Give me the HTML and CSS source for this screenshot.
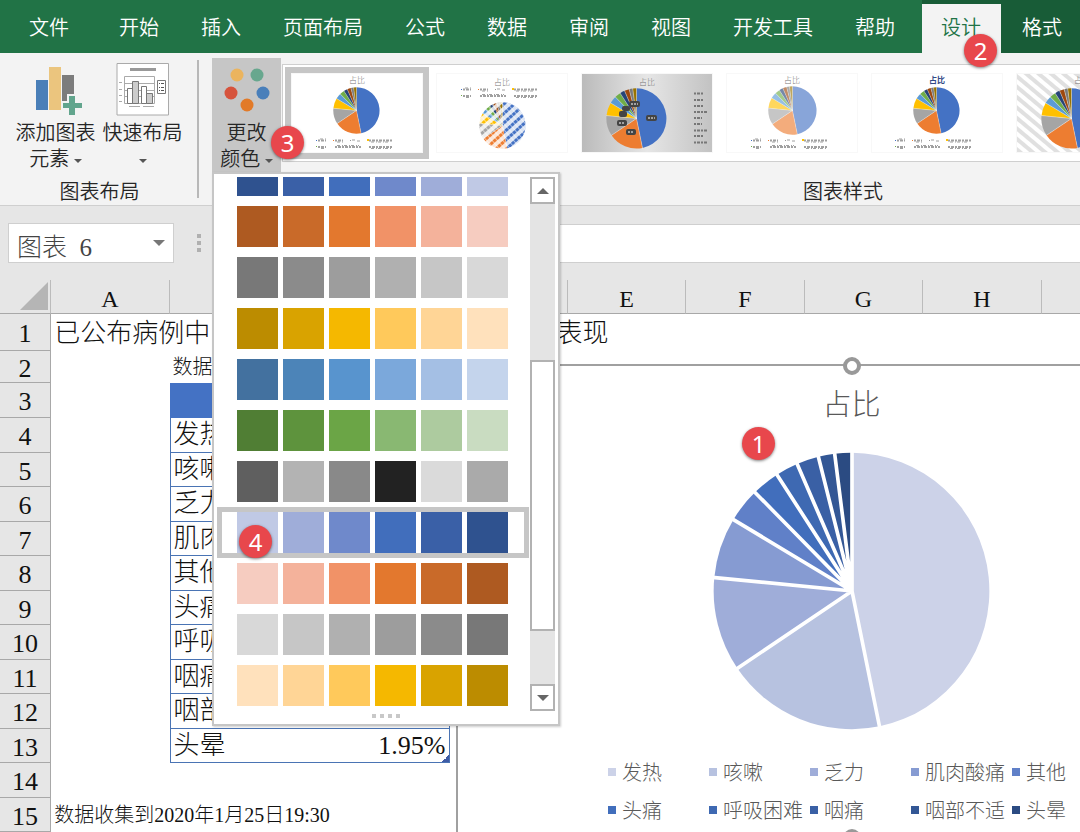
FILE: index.html
```html
<!DOCTYPE html>
<html lang="zh-CN">
<head>
<meta charset="utf-8">
<meta name="viewport" content="width=device-width, initial-scale=1">
<title>图表设计</title>
<link rel="stylesheet" href="styles.css">
</head>
<body>
<svg class="defs" aria-hidden="true">
  <symbol id="pie" viewBox="-420 -420 840 840">
    <path class="s1" d="M0 0L0 -415A415 415 0 0 1 83 406Z"/>
    <path class="s2" d="M0 0L83 406A415 415 0 0 1 -344 232Z"/>
    <path class="s3" d="M0 0L-344 232A415 415 0 0 1 -413 -41Z"/>
    <path class="s4" d="M0 0L-413 -41A415 415 0 0 1 -356 -214Z"/>
    <path class="s5" d="M0 0L-356 -214A415 415 0 0 1 -291 -296Z"/>
    <path class="s6" d="M0 0L-291 -296A415 415 0 0 1 -225 -349Z"/>
    <path class="s7" d="M0 0L-225 -349A415 415 0 0 1 -165 -381Z"/>
    <path class="s8" d="M0 0L-165 -381A415 415 0 0 1 -101 -403Z"/>
    <path class="s9" d="M0 0L-101 -403A415 415 0 0 1 -52 -412Z"/>
    <path class="s10" d="M0 0L-52 -412A415 415 0 0 1 0 -415Z"/>
    <path class="rays" d="M0 0V-420M0 0L84 414M0 0L-350 236M0 0L-419 -41M0 0L-362 -218M0 0L-296 -301M0 0L-229 -355M0 0L-168 -389M0 0L-103 -411M0 0L-53 -420"/>
  </symbol>
  <symbol id="mini-legend" viewBox="0 0 78 12">
    <g fill="none" stroke="#a0a0a0" stroke-width="2">
      <path stroke-dasharray="2 1 3 1" d="M2 2.500h8M19 2.500h8M53 2.500h24M2 9h8M19 9h26M53 9h24"/>
      <path stroke-width="1" d="M36 2l3 0M41 3h3"/>
      <path stroke-width="1" stroke-dasharray="3 2 1 1" d="M4 1h6M21 4h6M55 4h18M5 10.500h5M21 7.500h22M55 10.500h20"/>
    </g>
    <path fill="#4472c4" d="M0 2h1v1h-1z"/><path fill="#ed7d31" d="M17 2h1v1h-1z"/><path fill="#999" d="M34 2h1v1h-1z"/><path fill="#ffc000" d="M51 1h2v2h-2z"/><path fill="#70ad47" d="M0 8h1v1h-1z"/>
  </symbol>
  <pattern id="dots" width="4" height="7" patternUnits="userSpaceOnUse" patternTransform="rotate(-42)"><rect width="4" height="4" fill="#fff" opacity=".8"/><path d="M0 0V7" stroke="#fff" stroke-width="2" opacity=".5"/></pattern>
  <pattern id="stripes" width="8" height="8" patternUnits="userSpaceOnUse" patternTransform="rotate(40)"><rect width="8" height="4" fill="#e0e0e0"/></pattern>
  <linearGradient id="shade"><stop offset="0" stop-color="#bababa"/><stop offset=".5" stop-color="#e6e6e6"/><stop offset="1" stop-color="#c2c2c2"/></linearGradient>
  <symbol id="down" viewBox="0 0 12 6"><path d="M0 0h12l-6 6z"/></symbol>
</svg>

<nav class="tabs">
  <a class="tab file" href="#">文件</a>
  <a class="tab" href="#">开始</a>
  <a class="tab" href="#">插入</a>
  <a class="tab" href="#">页面布局</a>
  <a class="tab" href="#">公式</a>
  <a class="tab" href="#">数据</a>
  <a class="tab" href="#">审阅</a>
  <a class="tab" href="#">视图</a>
  <a class="tab" href="#">开发工具</a>
  <a class="tab" href="#">帮助</a>
  <div class="context">
    <a class="tab active" href="#" aria-current="page">设计<span class="badge b2">2</span></a>
    <a class="tab" href="#">格式</a>
  </div>
</nav>

<section class="ribbon">
  <div class="group layout">
    <div class="tools">
      <button class="tool" type="button">
        <svg class="icon" width="50" height="52" viewBox="0 0 50 52">
          <path fill="#4a7fb8" d="M5 17h12v30H5z"/><path fill="#ebc57e" d="M18 4h12v43H18z"/><path fill="#7c7c7c" d="M31 12h12v27H31z"/>
          <path fill="#f3f3f3" d="M36 31h10v7h7v8h-7v7H36v-7h-5v-8h5z"/><path fill="#62a58d" d="M38 33h6v7h7v5h-7v7h-6v-7h-6v-5h6z"/>
        </svg>
        <span>添加图表</span><span>元素 <svg class="caret" width="8" height="4"><use href="#down"/></svg></span>
      </button>
      <button class="tool" type="button">
        <svg class="icon" width="54" height="52" viewBox="0 0 54 52">
          <path fill="#fff" stroke="#aaa" d="M1 .5h51.500v51.500H1z"/><path fill="#999" d="M14 5h26v3H14z"/>
          <path fill="none" stroke="#aaa" d="M8.500 13.500h30v27h-30zM8 20.500h31M8 27.500h31M8 33.500h31M3 19.500h3M3 26.500h3M3 32.500h3M3 38.500h3M13 43.500h11M27 43.500h11"/>
          <g stroke="#777"><path fill="#fff" d="M11.500 25.500h5v15h-5zM25.500 23.500h5v17h-5z"/><path fill="#ccc" d="M16.500 18.500h6v22h-6zM30.500 30.500h6v10h-6z"/><path fill="#fff" d="M41.500 17.500h8v13h-8z"/></g>
          <path stroke="#555" stroke-dasharray="1 1 3 9" d="M43 20.500h6M43 24.500h6M43 27.500h6"/>
        </svg>
        <span>快速布局</span><span><svg class="caret" width="8" height="4"><use href="#down"/></svg></span>
      </button>
    </div>
    <div class="caption">图表布局</div>
  </div>

  <div class="group styles">
    <div class="tools">
      <div class="color-menu">
        <button class="tool pressed" type="button" aria-expanded="true">
          <svg class="icon" width="50" height="46" viewBox="0 0 50 46">
            <circle cx="15" cy="7" r="6.500" fill="#ebb45e"/><circle cx="35" cy="7" r="6.500" fill="#68a78e"/><circle cx="9" cy="25" r="6.500" fill="#d6533c"/><circle cx="41" cy="25" r="6.500" fill="#497fba"/><circle cx="25" cy="37" r="6.500" fill="#e27a28"/>
          </svg>
          <span>更改</span><span>颜色 <svg class="caret" width="8" height="4"><use href="#down"/></svg></span>
        </button>
        <span class="badge b3">3</span>

        <div class="popup">
          <div class="popup-body">
            <div class="palettes">
              <button type="button" class="palette blue" aria-label="蓝色 深到浅"><i></i><i></i><i></i><i></i><i></i><i></i></button>
              <button type="button" class="palette orange" aria-label="橙色 深到浅"><i></i><i></i><i></i><i></i><i></i><i></i></button>
              <button type="button" class="palette grey" aria-label="灰色 深到浅"><i></i><i></i><i></i><i></i><i></i><i></i></button>
              <button type="button" class="palette gold" aria-label="金色 深到浅"><i></i><i></i><i></i><i></i><i></i><i></i></button>
              <button type="button" class="palette sky" aria-label="浅蓝 深到浅"><i></i><i></i><i></i><i></i><i></i><i></i></button>
              <button type="button" class="palette green" aria-label="绿色 深到浅"><i></i><i></i><i></i><i></i><i></i><i></i></button>
              <button type="button" class="palette mixed" aria-label="灰黑"><i></i><i></i><i></i><i></i><i></i><i></i></button>
              <button type="button" class="palette blue reverse selected" aria-label="蓝色 浅到深"><i></i><i></i><i></i><i></i><i></i><i></i><span class="badge b4">4</span></button>
              <button type="button" class="palette orange reverse" aria-label="橙色 浅到深"><i></i><i></i><i></i><i></i><i></i><i></i></button>
              <button type="button" class="palette grey reverse" aria-label="灰色 浅到深"><i></i><i></i><i></i><i></i><i></i><i></i></button>
              <button type="button" class="palette gold reverse" aria-label="金色 浅到深"><i></i><i></i><i></i><i></i><i></i><i></i></button>
            </div>
            <div class="scroll">
              <button type="button" class="step" aria-label="向上"><svg class="up" width="12" height="6"><use href="#down"/></svg></button>
              <div class="track"><div class="thumb"></div></div>
              <button type="button" class="step" aria-label="向下"><svg width="12" height="6"><use href="#down"/></svg></button>
            </div>
          </div>
          <div class="grip"><i></i><i></i><i></i><i></i></div>
        </div>
      </div>

      <div class="gallery">
        <button type="button" class="style chosen" aria-label="样式 1"><svg viewBox="0 0 132 80" class="multi"><text x="66" y="10">占比</text><use href="#pie" x="42" y="14" width="47" height="47"/><use href="#mini-legend" x="25" y="65" width="78" height="12"/></svg></button>
        <button type="button" class="style" aria-label="样式 2"><svg viewBox="0 0 132 80" class="multi"><text x="66" y="12">占比</text><use href="#mini-legend" x="25" y="14" width="78" height="12"/><use href="#pie" x="43" y="29" width="47" height="47"/><circle cx="66" cy="53" r="24" fill="url(#dots)"/></svg></button>
        <button type="button" class="style" aria-label="样式 3"><svg viewBox="0 0 132 80" class="multi"><path fill="url(#shade)" d="M0 0h132v80H0z"/><text x="66" y="12">占比</text><use href="#pie" x="25" y="15" width="61" height="61"/><g fill="#444"><rect x="65" y="42" width="11" height="6" rx="2"/><rect x="45" y="56" width="10" height="6" rx="2"/><rect x="36" y="47" width="10" height="6" rx="2"/><rect x="38" y="38" width="8" height="6" rx="2"/><rect x="41" y="33" width="8" height="5" rx="2"/><rect x="48" y="28" width="11" height="6" rx="2"/></g><path stroke="#fff" stroke-dasharray="2 1" d="M67 45h7M47 59h6M38 50h6M50 31h7"/><path fill="none" stroke="#777" stroke-width="2" stroke-dasharray="2 1 3 1" d="M113 20.500h9M113 27h9M113 33h9M113 39h14M113 45h8M113 51h8M113 57.500h14M113 63h9M113 69.500h14"/></svg></button>
        <button type="button" class="style" aria-label="样式 4"><svg viewBox="0 0 132 80" class="multi"><text x="66" y="10">占比</text><use href="#pie" x="42" y="13" width="49" height="49" opacity=".63"/><use href="#mini-legend" x="25" y="65" width="78" height="12"/></svg></button>
        <button type="button" class="style" aria-label="样式 5"><svg viewBox="0 0 132 80" class="multi"><text x="66" y="10" class="navy">占比</text><use href="#pie" x="42" y="14" width="47" height="47"/><use href="#mini-legend" x="24" y="65" width="78" height="12"/></svg></button>
        <button type="button" class="style" aria-label="样式 6"><svg viewBox="0 0 132 80" class="multi"><path fill="url(#stripes)" d="M0 0h132v80H0z"/><text x="66" y="10">占比</text><use href="#pie" x="25" y="15" width="61" height="61"/></svg></button>
      </div>
    </div>
    <div class="caption">图表样式</div>
  </div>
</section>

<section class="formula-row">
  <div class="name-box">
    <input type="text" value="图表&ensp;6" aria-label="名称框">
    <button type="button" aria-label="展开名称"><svg width="12" height="6"><use href="#down"/></svg></button>
  </div>
  <div class="handle"><i></i><i></i><i></i></div>
  <input class="formula" type="text" aria-label="编辑栏">
</section>

<main class="sheet">
  <table>
    <colgroup><col class="c-num"><col class="c-a"><col class="c-b"><col class="c-std"><col class="c-std"><col class="c-std"><col class="c-std"><col class="c-std"><col class="c-std"><col class="c-std"></colgroup>
    <thead>
      <tr><th class="corner"><svg width="28" height="28" viewBox="0 0 28 28"><path fill="#b5b5b5" d="M28 0v28H0z"/></svg></th><th>A</th><th></th><th></th><th></th><th>E</th><th>F</th><th>G</th><th>H</th><th></th></tr>
    </thead>
    <tbody>
      <tr class="r1"><th>1</th><td colspan="3" class="title">已公布病例中</td><td colspan="6" class="title rest">表现</td></tr>
      <tr class="r2"><th>2</th><td></td><td class="small">数据</td></tr>
      <tr><th>3</th><td></td><td class="head" colspan="2"></td></tr>
      <tr><th>4</th><td></td><td class="data first">发热</td><td class="data last"></td></tr>
      <tr><th>5</th><td></td><td class="data first">咳嗽</td><td class="data last"></td></tr>
      <tr><th>6</th><td></td><td class="data first">乏力</td><td class="data last"></td></tr>
      <tr><th>7</th><td></td><td class="data first">肌肉</td><td class="data last"></td></tr>
      <tr><th>8</th><td></td><td class="data first">其他</td><td class="data last"></td></tr>
      <tr><th>9</th><td></td><td class="data first">头痛</td><td class="data last"></td></tr>
      <tr><th>10</th><td></td><td class="data first">呼吸</td><td class="data last"></td></tr>
      <tr><th>11</th><td></td><td class="data first">咽痛</td><td class="data last"></td></tr>
      <tr><th>12</th><td></td><td class="data first">咽部</td><td class="data last"></td></tr>
      <tr><th>13</th><td></td><td class="data first">头晕</td><td class="data last corner-mark">1.95%</td></tr>
      <tr><th>14</th><td></td></tr>
      <tr><th>15</th><td colspan="3" class="small">数据收集到2020年1月25日19:30</td></tr>
    </tbody>
  </table>

  <figure class="chart">
    <span class="knob top"></span>
    <figcaption>占比</figcaption>
    <svg class="pie" width="280" height="280" role="img" aria-label="占比"><use href="#pie"/></svg>
    <ul class="legend">
      <li class="k1">发热</li><li class="k2">咳嗽</li><li class="k3">乏力</li><li class="k4">肌肉酸痛</li><li class="k5">其他</li>
      <li class="k6">头痛</li><li class="k7">呼吸困难</li><li class="k8">咽痛</li><li class="k9">咽部不适</li><li class="k10">头晕</li>
    </ul>
    <span class="knob bottom"></span>
    <span class="badge b1">1</span>
  </figure>
</main>
</body>
</html>
```
FILE: styles.css
```css
* { box-sizing: border-box; }

:root {
  --sans: "Noto Sans CJK SC", sans-serif;
  --serif: "Liberation Serif", "Noto Sans CJK SC", serif;
}

body {
  margin: 0;
  height: 100vh;
  display: flex;
  flex-direction: column;
  overflow: hidden;
  background: #fff;
  color: #262626;
  font: 300 20px/26px var(--sans);
}

button, input { font: inherit; color: inherit; border: 0; padding: 0; background: none; border-radius: 0; }
i { display: block; }
.defs { position: absolute; width: 0; height: 0; }

/* Tab strip */
.tabs { display: flex; height: 53px; background: #217346; flex: none; }
.tab { display: flex; align-items: center; padding: 1px 21px 0; color: #fff; text-decoration: none; white-space: nowrap; font-weight: 350; }
.tab.file { padding: 1px 29px 0; }
.context { display: flex; flex: 1; margin-left: 6px; background: #185c37; }
.context .tab.active { position: relative; margin-top: 4px; padding: 0 20px 3px 19px; background: #f3f3f3; color: #217346; }

/* Numbered callouts */
.badge {
  position: absolute;
  z-index: 5;
  width: 33px;
  height: 33px;
  border-radius: 50%;
  background: #e8474c;
  box-shadow: 0 1px 3px rgba(0, 0, 0, .5);
  color: #fff;
  font: 24px/33px "Noto Sans", sans-serif;
  text-align: center;
}
.b1 { left: 284px; top: 61px; }
.b2 { left: 42px; top: 30px; }
.b3 { left: 59px; top: 73px; }
.b4 { left: 17px; top: 13px; }

/* Ribbon */
.ribbon { display: flex; flex: none; height: 153px; background: #f3f3f3; border-bottom: 1px solid #cfcfcf; }
.group { display: flex; flex-direction: column; }
.group.layout { width: 199px; position: relative; }
.group.layout::after { content: ""; position: absolute; right: 0; top: 7px; bottom: 7px; width: 2px; background: #b8b8b8; }
.group.styles { flex: 1; min-width: 0; margin-left: 13px; }
.tools { display: flex; height: 119px; }
.layout .tools { padding-left: 12px; }
.caption { text-align: center; line-height: 38px; font-weight: 350; }
.tool { display: flex; flex-direction: column; align-items: center; width: 87px; padding-top: 10px; height: 119px; font-weight: 350; line-height: 26px; white-space: nowrap; }
.tool .icon { margin-bottom: 4px; flex: none; overflow: visible; }
.tool span { height: 26px; }
.caret { vertical-align: 3px; fill: #555; }
.color-menu { position: relative; flex: none; }
.tool.pressed { width: 69px; height: 115px; margin-top: 5px; padding-top: 10px; background: #c6c6c6; }
.tool.pressed .icon { margin-bottom: 5px; }

/* Chart style gallery */
.gallery { display: flex; flex: 1; min-width: 0; overflow: hidden; gap: 1px; height: 98px; margin: 11px 0 0 1px; padding: 2px; background: #fff; border: solid #cfcfcf; border-width: 1px 0 1px 1px; }
.style { flex: none; width: 144px; height: 92px; border: 6px solid transparent; }
.style.chosen { border-color: #c6c6c6; }
.style svg { display: block; width: 132px; height: 80px; outline: 1px solid #f8f8f8; outline-offset: -1px; }
.style text { font-size: 8px; text-anchor: middle; fill: #777; }
.style text.navy { fill: #334a86; font-weight: 700; }
.group.styles .caption { padding-left: 394px; }

.multi { --s1: #4472c4; --s2: #ed7d31; --s3: #a5a5a5; --s4: #ffc000; --s5: #5b9bd5; --s6: #70ad47; --s7: #264478; --s8: #9e480e; --s9: #7a7a7a; --s10: #997300; --ray: 5; }
.s1 { fill: var(--s1); } .s2 { fill: var(--s2); } .s3 { fill: var(--s3); } .s4 { fill: var(--s4); } .s5 { fill: var(--s5); }
.s6 { fill: var(--s6); } .s7 { fill: var(--s7); } .s8 { fill: var(--s8); } .s9 { fill: var(--s9); } .s10 { fill: var(--s10); }
.rays { stroke: #fff; stroke-width: var(--ray); fill: none; }

/* Colour popup */
.popup { position: absolute; z-index: 4; left: 0; top: 119px; width: 348px; height: 554px; padding: 3px; background: #fff; border: 2px solid #c6c6c6; box-shadow: 1px 1px 2px rgba(0, 0, 0, .2); }
.popup-body { display: flex; gap: 1px; height: 534px; }
.palettes { display: flex; flex-direction: column; justify-content: flex-end; flex: none; width: 312px; overflow: hidden; }
.palette { position: relative; display: flex; gap: 5px; flex: none; height: 51px; padding-left: 15px; border: 5px solid transparent; }
.palette.selected { border-color: #c6c6c6; }
.palette i { width: 41px; height: 41px; }
.palette.reverse i:nth-child(1) { order: 6; }
.palette.reverse i:nth-child(2) { order: 5; }
.palette.reverse i:nth-child(3) { order: 4; }
.palette.reverse i:nth-child(4) { order: 3; }
.palette.reverse i:nth-child(5) { order: 2; }
.palette.reverse i:nth-child(6) { order: 1; }
.palette i:nth-child(1) { background: var(--p1); }
.palette i:nth-child(2) { background: var(--p2); }
.palette i:nth-child(3) { background: var(--p3); }
.palette i:nth-child(4) { background: var(--p4); }
.palette i:nth-child(5) { background: var(--p5); }
.palette i:nth-child(6) { background: var(--p6); }
.blue { --p1: #2f528f; --p2: #3a60a7; --p3: #416ebc; --p4: #6f89cb; --p5: #9fadd9; --p6: #c0c9e5; }
.orange { --p1: #ae5a21; --p2: #c96a29; --p3: #e3782e; --p4: #f19267; --p5: #f4b29b; --p6: #f6ccc0; }
.grey { --p1: #787878; --p2: #8b8b8b; --p3: #9d9d9d; --p4: #b0b0b0; --p5: #c6c6c6; --p6: #d8d8d8; }
.gold { --p1: #bc8c00; --p2: #d9a300; --p3: #f5b800; --p4: #ffc95b; --p5: #ffd596; --p6: #ffe1bc; }
.sky { --p1: #43719f; --p2: #4c84b8; --p3: #5894ce; --p4: #7ba8db; --p5: #a4bfe4; --p6: #c4d4ec; }
.green { --p1: #507e34; --p2: #5e933d; --p3: #6ba546; --p4: #89b872; --p5: #adcb9f; --p6: #c9dcc1; }
.mixed { --p1: #5f5f5f; --p2: #b3b3b3; --p3: #898989; --p4: #222; --p5: #dadada; --p6: #aaa; }
.scroll { display: flex; flex-direction: column; width: 27px; background: #e4e4e4; }
.step { display: flex; align-items: center; justify-content: center; height: 27px; background: #fff; border: 2px solid #b2b2b2; fill: #666; }
.step .up { transform: rotate(180deg); }
.track { flex: 1; padding-top: 156px; }
.thumb { height: 271px; background: #fff; border: 2px solid #b2b2b2; }
.grip { display: flex; justify-content: center; gap: 4px; padding-top: 3px; }
.grip i { width: 4px; height: 4px; background: #c8c8c8; }

/* Name box and formula bar */
.formula-row { display: flex; flex: none; align-items: center; height: 74px; padding-left: 8px; background: #e6e6e6; }
.name-box { display: flex; align-items: center; width: 166px; height: 40px; padding: 0 8px; background: #fff; border: 1px solid #cfcfcf; }
.name-box input { flex: 1; min-width: 0; height: 38px; padding-top: 4px; font: 300 25px/34px var(--serif); color: #444; }
.name-box svg { display: block; fill: #777; }
.handle { display: flex; flex-direction: column; gap: 3px; margin: 0 11px 0 23px; }
.handle i { width: 4px; height: 4px; background: #b0b0b0; }
.formula { flex: 1; min-width: 0; height: 39px; background: #fff; border: 1px solid #cfcfcf; border-right: 0; }

/* Worksheet */
.sheet { position: relative; flex: 1; overflow: hidden; }
table { width: 1160px; border-collapse: separate; border-spacing: 0; table-layout: fixed; font: 300 26px/26px var(--serif); color: #111; }
.c-num { width: 51px; }
.c-a { width: 118px; }
.c-b { width: 161px; }
.c-std { width: 118px; }
th { padding: 4px 0 0; font-weight: 400; background: #e6e6e6; border: solid #a8a8a8; border-width: 0 1px 1px 0; text-align: center; }
thead th { height: 34px; font-size: 24px; border-right-color: #bbb; }
thead th.corner { padding: 0 2px 2px; text-align: right; }
.corner svg { display: block; margin-left: auto; }
td { padding: 0 3px; white-space: nowrap; }
tbody tr { height: 35px; }
tbody tr:nth-child(odd) { height: 34px; }
tbody tr:nth-child(3) { height: 35px; }
tbody tr.r1 { height: 37px; }
tbody tr.r2 { height: 32px; }
.title { font-family: var(--sans); padding-bottom: 4px; }
.title.rest { padding-left: 107px; }
.small { font-size: 20px; }
.head { background: #4472c4; }
.data { border-bottom: 1px solid #4a74b4; }
.data.first { border-left: 1px solid #4a74b4; }
.data.last { border-right: 1px solid #4a74b4; text-align: right; }
.corner-mark { background: linear-gradient(135deg, transparent 50%, #3f5ba5 50%) right bottom / 7px 7px no-repeat; }

/* Chart object on the sheet */
.chart { position: absolute; left: 456px; top: 84px; width: 791px; height: 476px; margin: 0; padding-top: 16px; display: flex; flex-direction: column; align-items: center; background: #fff; border: 2px solid #a0a0a0;
  --s1: #ccd2e8; --s2: #b7c2e0; --s3: #9fadd9; --s4: #869bd2; --s5: #6080c8; --s6: #416ebc; --s7: #3e69b2; --s8: #3a60a5; --s9: #335795; --s10: #2b4b82; --ray: 11; }
.knob { position: absolute; left: 385px; width: 18px; height: 18px; border: 4px solid #999; border-radius: 50%; background: #fff; }
.knob.top { top: -9px; }
.knob.bottom { bottom: -9px; }
figcaption { font-size: 29px; line-height: 40px; color: #595959; }
.pie { margin-top: 29px; }
.legend { display: grid; grid-template-columns: repeat(5, 101px); row-gap: 12px; align-self: flex-start; margin: 28px 0 0 150px; padding: 0; list-style: none; color: #595959; }
.legend li { display: flex; align-items: center; gap: 6px; white-space: nowrap; }
.legend li::before { content: ""; width: 8px; height: 8px; background: var(--key); }
.k1 { --key: var(--s1); } .k2 { --key: var(--s2); } .k3 { --key: var(--s3); } .k4 { --key: var(--s4); } .k5 { --key: var(--s5); }
.k6 { --key: var(--s6); } .k7 { --key: var(--s7); } .k8 { --key: var(--s8); } .k9 { --key: var(--s9); } .k10 { --key: var(--s10); }
```
